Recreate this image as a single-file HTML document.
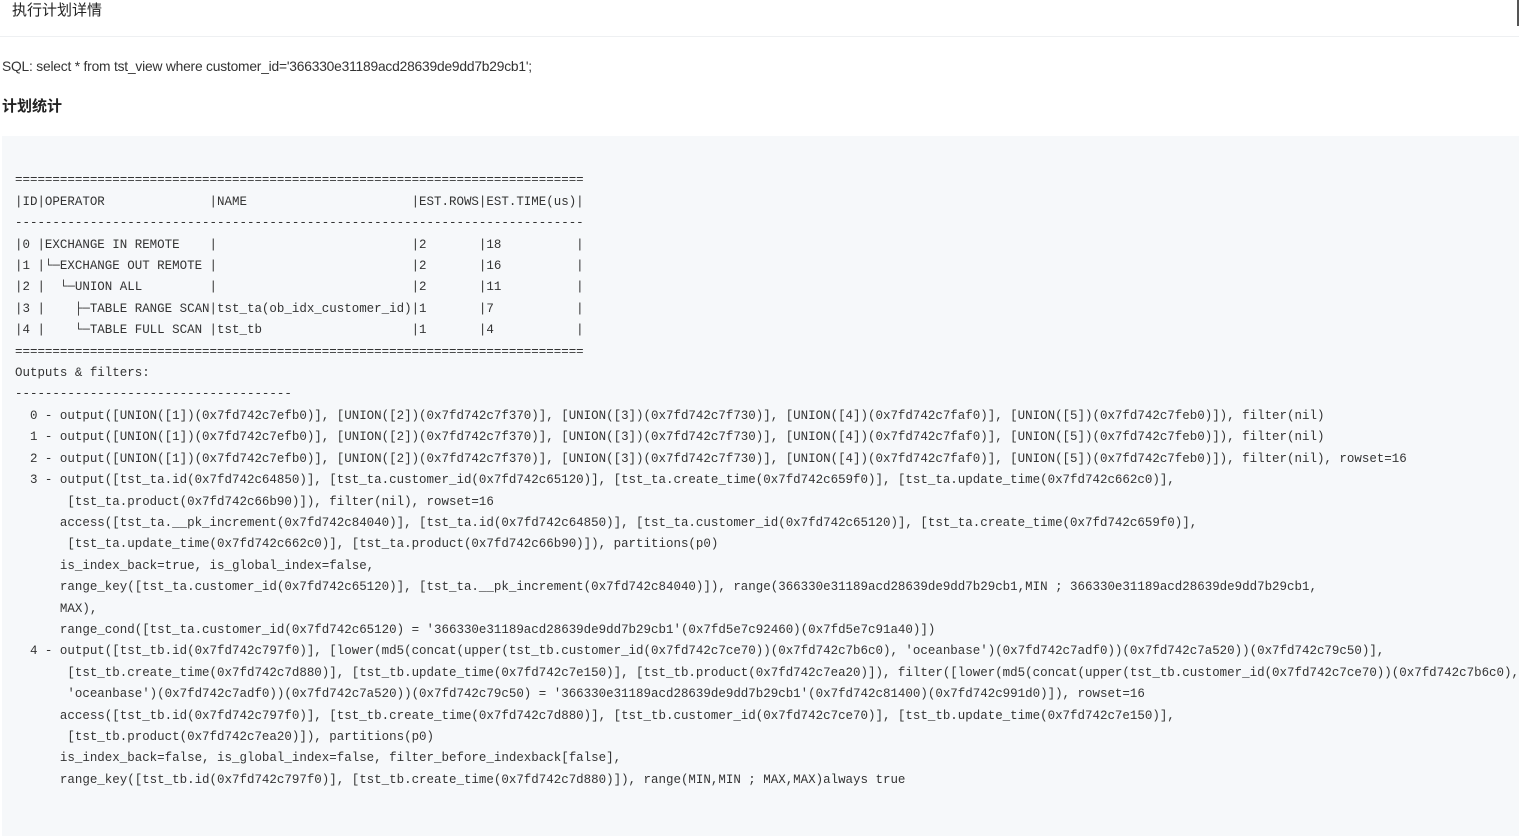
<!DOCTYPE html>
<html><head><meta charset="utf-8">
<style>
html,body{margin:0;padding:0;background:#fff;width:1519px;height:789px;overflow:hidden}
.top{position:absolute;left:0;top:0;width:1519px;height:36px;border-bottom:1px solid #eef0f2;}
.top span{position:absolute;left:12px;top:1px;font:15px "Liberation Sans","Noto Sans CJK SC",sans-serif;color:#222;line-height:20px}
.sb{position:absolute;left:1517px;top:0;width:2px;height:26px;background:#555}
.sql{position:absolute;left:2px;top:58px;font:13.8px "Liberation Sans","Noto Sans CJK SC",sans-serif;color:#333;line-height:18px;letter-spacing:-0.2px}
.h{position:absolute;left:2px;top:97px;font:bold 15px "Liberation Sans","Noto Sans CJK SC",sans-serif;color:#222;line-height:20px}
pre{position:absolute;left:2px;top:136px;width:1517px;height:700px;margin:0;background:#f6f8fa;padding:13px 0 0 13px;box-sizing:border-box;
font:12.48px "Liberation Mono","DejaVu Sans Mono",monospace;line-height:21.4px;color:#333;white-space:pre;overflow:hidden}
</style></head><body>
<div class="top"><span>执行计划详情</span></div>
<div class="sb"></div>
<div class="sql">SQL: select * from tst_view where customer_id='366330e31189acd28639de9dd7b29cb1';</div>
<div class="h">计划统计</div>
<pre>

============================================================================
|ID|OPERATOR              |NAME                      |EST.ROWS|EST.TIME(us)|
----------------------------------------------------------------------------
|0 |EXCHANGE IN REMOTE    |                          |2       |18          |
|1 |└─EXCHANGE OUT REMOTE |                          |2       |16          |
|2 |  └─UNION ALL         |                          |2       |11          |
|3 |    ├─TABLE RANGE SCAN|tst_ta(ob_idx_customer_id)|1       |7           |
|4 |    └─TABLE FULL SCAN |tst_tb                    |1       |4           |
============================================================================
Outputs &amp; filters:
-------------------------------------
  0 - output([UNION([1])(0x7fd742c7efb0)], [UNION([2])(0x7fd742c7f370)], [UNION([3])(0x7fd742c7f730)], [UNION([4])(0x7fd742c7faf0)], [UNION([5])(0x7fd742c7feb0)]), filter(nil)
  1 - output([UNION([1])(0x7fd742c7efb0)], [UNION([2])(0x7fd742c7f370)], [UNION([3])(0x7fd742c7f730)], [UNION([4])(0x7fd742c7faf0)], [UNION([5])(0x7fd742c7feb0)]), filter(nil)
  2 - output([UNION([1])(0x7fd742c7efb0)], [UNION([2])(0x7fd742c7f370)], [UNION([3])(0x7fd742c7f730)], [UNION([4])(0x7fd742c7faf0)], [UNION([5])(0x7fd742c7feb0)]), filter(nil), rowset=16
  3 - output([tst_ta.id(0x7fd742c64850)], [tst_ta.customer_id(0x7fd742c65120)], [tst_ta.create_time(0x7fd742c659f0)], [tst_ta.update_time(0x7fd742c662c0)],
       [tst_ta.product(0x7fd742c66b90)]), filter(nil), rowset=16
      access([tst_ta.__pk_increment(0x7fd742c84040)], [tst_ta.id(0x7fd742c64850)], [tst_ta.customer_id(0x7fd742c65120)], [tst_ta.create_time(0x7fd742c659f0)],
       [tst_ta.update_time(0x7fd742c662c0)], [tst_ta.product(0x7fd742c66b90)]), partitions(p0)
      is_index_back=true, is_global_index=false,
      range_key([tst_ta.customer_id(0x7fd742c65120)], [tst_ta.__pk_increment(0x7fd742c84040)]), range(366330e31189acd28639de9dd7b29cb1,MIN ; 366330e31189acd28639de9dd7b29cb1,
      MAX),
      range_cond([tst_ta.customer_id(0x7fd742c65120) = '366330e31189acd28639de9dd7b29cb1'(0x7fd5e7c92460)(0x7fd5e7c91a40)])
  4 - output([tst_tb.id(0x7fd742c797f0)], [lower(md5(concat(upper(tst_tb.customer_id(0x7fd742c7ce70))(0x7fd742c7b6c0), 'oceanbase')(0x7fd742c7adf0))(0x7fd742c7a520))(0x7fd742c79c50)],
       [tst_tb.create_time(0x7fd742c7d880)], [tst_tb.update_time(0x7fd742c7e150)], [tst_tb.product(0x7fd742c7ea20)]), filter([lower(md5(concat(upper(tst_tb.customer_id(0x7fd742c7ce70))(0x7fd742c7b6c0),
       'oceanbase')(0x7fd742c7adf0))(0x7fd742c7a520))(0x7fd742c79c50) = '366330e31189acd28639de9dd7b29cb1'(0x7fd742c81400)(0x7fd742c991d0)]), rowset=16
      access([tst_tb.id(0x7fd742c797f0)], [tst_tb.create_time(0x7fd742c7d880)], [tst_tb.customer_id(0x7fd742c7ce70)], [tst_tb.update_time(0x7fd742c7e150)],
       [tst_tb.product(0x7fd742c7ea20)]), partitions(p0)
      is_index_back=false, is_global_index=false, filter_before_indexback[false],
      range_key([tst_tb.id(0x7fd742c797f0)], [tst_tb.create_time(0x7fd742c7d880)]), range(MIN,MIN ; MAX,MAX)always true
</pre>
</body></html>
